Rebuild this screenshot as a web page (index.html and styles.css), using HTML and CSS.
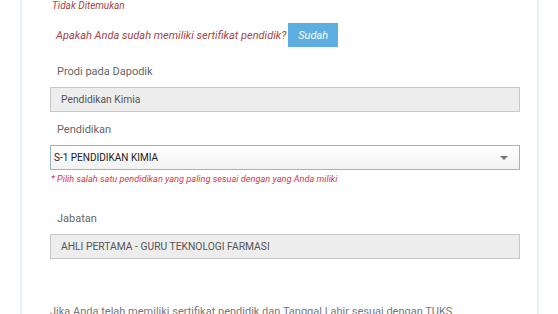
FILE: index.html
```html
<!DOCTYPE html>
<html lang="id">
<head>
  <meta charset="UTF-8">
  <title>Data Pendidik</title>
  <link rel="stylesheet" href="styles.css">
</head>
<body>
  <div class="panel">
    <div class="not-found">Tidak Ditemukan</div>

    <div class="question">
      <span>Apakah Anda sudah memiliki sertifikat pendidik?</span>
      <button class="btn-sudah">Sudah</button>
    </div>

    <div class="form-group prodi">
      <label>Prodi pada Dapodik</label>
      <div class="form-control disabled">Pendidikan Kimia</div>
    </div>

    <div class="form-group">
      <label>Pendidikan</label>
      <div class="form-control select">
        <span>S-1 PENDIDIKAN KIMIA</span>
        <span class="caret"></span>
      </div>
      <div class="help">* Pilih salah satu pendidikan yang paling sesuai dengan yang Anda miliki</div>
    </div>

    <div class="form-group jabatan">
      <label>Jabatan</label>
      <div class="form-control disabled">AHLI PERTAMA - GURU TEKNOLOGI FARMASI</div>
    </div>

    <p class="note">Jika Anda telah memiliki sertifikat pendidik dan Tanggal Lahir sesuai dengan TUKS</p>
  </div>
</body>
</html>
```

FILE: styles.css
```css
html, body {
  margin: 0;
  padding: 0;
  height: 314px;
  overflow: hidden;
  background: #fff;
  font-family: Roboto, "Liberation Sans", sans-serif;
  color: #555;
}
.panel {
  margin: 0 19px 0 20px;
  border-left: 2px solid #e6f3f7;
  border-right: 2px solid #e6f3f7;
  padding: 0 17px 0 28px;
  height: 314px;
  box-sizing: border-box;
}
.not-found {
  margin-left: 2px;
  font-size: 10px;
  line-height: 11px;
  font-style: italic;
  color: #a94442;
}
.question {
  display: flex;
  align-items: center;
  margin: 12px 0 0 6px;
  font-size: 11px;
  font-style: italic;
  color: #a94442;
}
.btn-sudah {
  margin-left: 2px;
  height: 24px;
  padding: 0 10px;
  border: none;
  background: #5dade0;
  color: #fff;
  font-family: Roboto, "Liberation Sans", sans-serif;
  font-size: 11px;
  font-style: italic;
}
.form-group {
  margin-top: 10px;
}
.prodi {
  margin-top: 17px;
}
.form-group label {
  display: block;
  margin-left: 7px;
  font-size: 11px;
  line-height: 16px;
  color: #666;
  margin-bottom: 7px;
}
.form-control {
  box-sizing: border-box;
  height: 25px;
  border: 1px solid #c8c8c8;
  display: flex;
  align-items: center;
  padding: 0 10px;
  font-size: 10.3px;
}
.disabled {
  background: #ededed;
  color: #555;
}
.select {
  border-color: #8fb9cc;
  background: linear-gradient(#fff, #f2f2f2);
  color: #222;
  font-size: 10px;
  padding-left: 3px;
  justify-content: space-between;
}
.caret {
  width: 0;
  height: 0;
  border-left: 4px solid transparent;
  border-right: 4px solid transparent;
  border-top: 4px solid #777;
  margin-right: 1px;
}
.help {
  margin: 3px 0 0 1px;
  font-size: 9.2px;
  line-height: 12px;
  font-style: italic;
  color: #d9363e;
}
.jabatan {
  margin-top: 26px;
}
.note {
  margin: 47px 0 0;
  font-size: 11px;
  line-height: 12px;
  color: #777;
  white-space: nowrap;
  overflow: hidden;
}
```
